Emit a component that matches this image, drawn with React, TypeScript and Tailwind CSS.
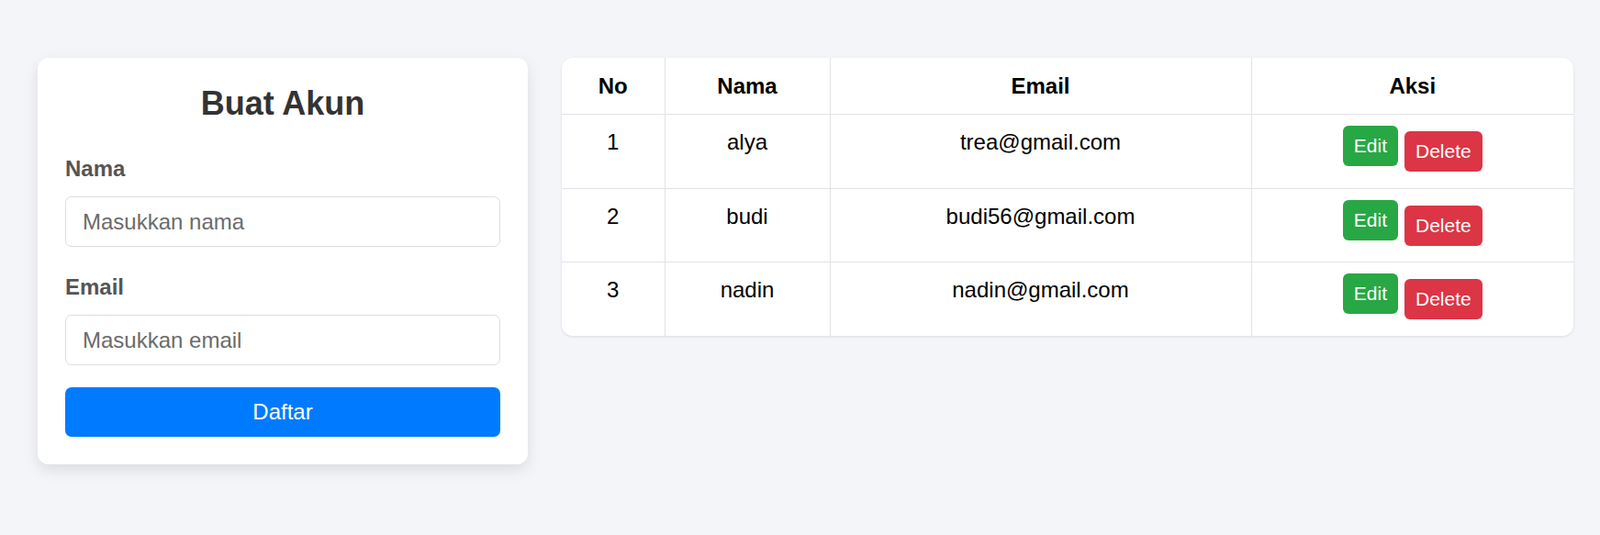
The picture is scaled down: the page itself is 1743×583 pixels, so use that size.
const users = [
  { no: 1, nama: "alya", email: "trea@gmail.com" },
  { no: 2, nama: "budi", email: "budi56@gmail.com" },
  { no: 3, nama: "nadin", email: "nadin@gmail.com" },
];

function FormCard() {
  return (
    <div className="w-[534px] shrink-0 rounded-[12px] bg-white p-[30px] shadow-[0_6px_16px_rgba(0,0,0,0.1)]">
      <h2 className="text-center text-[36px] font-bold leading-[40px] text-[#333]">
        Buat Akun
      </h2>
      <label className="mt-[37px] block text-[24px] font-bold leading-[27px] text-[#555]">
        Nama
      </label>
      <input
        type="text"
        placeholder="Masukkan nama"
        className="mt-[17px] block h-[55px] w-full rounded-[7px] border border-[#dcdde1] bg-white pl-[18px] text-[24px] text-[#333] outline-none placeholder:text-[#6b6b6b]"
      />
      <label className="mt-[30px] block text-[24px] font-bold leading-[27px] text-[#555]">
        Email
      </label>
      <input
        type="email"
        placeholder="Masukkan email"
        className="mt-[17px] block h-[55px] w-full rounded-[7px] border border-[#dcdde1] bg-white pl-[18px] text-[24px] text-[#333] outline-none placeholder:text-[#6b6b6b]"
      />
      <button className="mt-[24px] block h-[54px] w-full rounded-[7px] bg-[#007bff] text-[24px] text-white">
        Daftar
      </button>
    </div>
  );
}

function UserTable() {
  return (
    <div className="w-[1102px] overflow-hidden rounded-[12px] bg-white shadow-[0_1px_3px_rgba(0,0,0,0.1)]">
      <table className="w-full table-fixed border-collapse text-[24px] text-black">
        <colgroup>
          <col className="w-[112px]" />
          <col className="w-[180px]" />
          <col className="w-[459px]" />
          <col />
        </colgroup>
        <thead>
          <tr className="border-b border-[#e1e3e8]">
            {["No", "Nama", "Email", "Aksi"].map((h, i) => (
              <th
                key={h}
                className={
                  "pt-[17px] pb-[17px] text-center font-bold leading-[27px] " +
                  (i < 3 ? "border-r border-[#e1e3e8]" : "")
                }
              >
                {h}
              </th>
            ))}
          </tr>
        </thead>
        <tbody>
          {users.map((u, idx) => (
            <tr
              key={u.no}
              className={idx < users.length - 1 ? "border-b border-[#e1e3e8]" : ""}
            >
              <td className="border-r border-[#e1e3e8] pt-[16px] text-center align-top leading-[27px]">
                {u.no}
              </td>
              <td className="border-r border-[#e1e3e8] pt-[16px] text-center align-top leading-[27px]">
                {u.nama}
              </td>
              <td className="border-r border-[#e1e3e8] pt-[16px] text-center align-top leading-[27px]">
                {u.email}
              </td>
              <td className="pt-[12px] pb-[17.6px] align-top">
                <div className="flex items-start justify-center gap-[7px]">
                  <button className="h-[44px] rounded-[6px] bg-[#28a745] px-[12px] text-[21px] text-white">
                    Edit
                  </button>
                  <button className="mt-[6px] h-[44px] rounded-[6px] bg-[#dc3545] px-[12px] text-[21px] text-white">
                    Delete
                  </button>
                </div>
              </td>
            </tr>
          ))}
        </tbody>
      </table>
    </div>
  );
}

export default function App() {
  return (
    <div
      className="flex min-h-screen items-start gap-[37px] bg-[#f4f5f9] pl-[41px] pt-[63px]"
      style={{ fontFamily: '"Liberation Sans", Arial, sans-serif' }}
    >
      <FormCard />
      <UserTable />
    </div>
  );
}
